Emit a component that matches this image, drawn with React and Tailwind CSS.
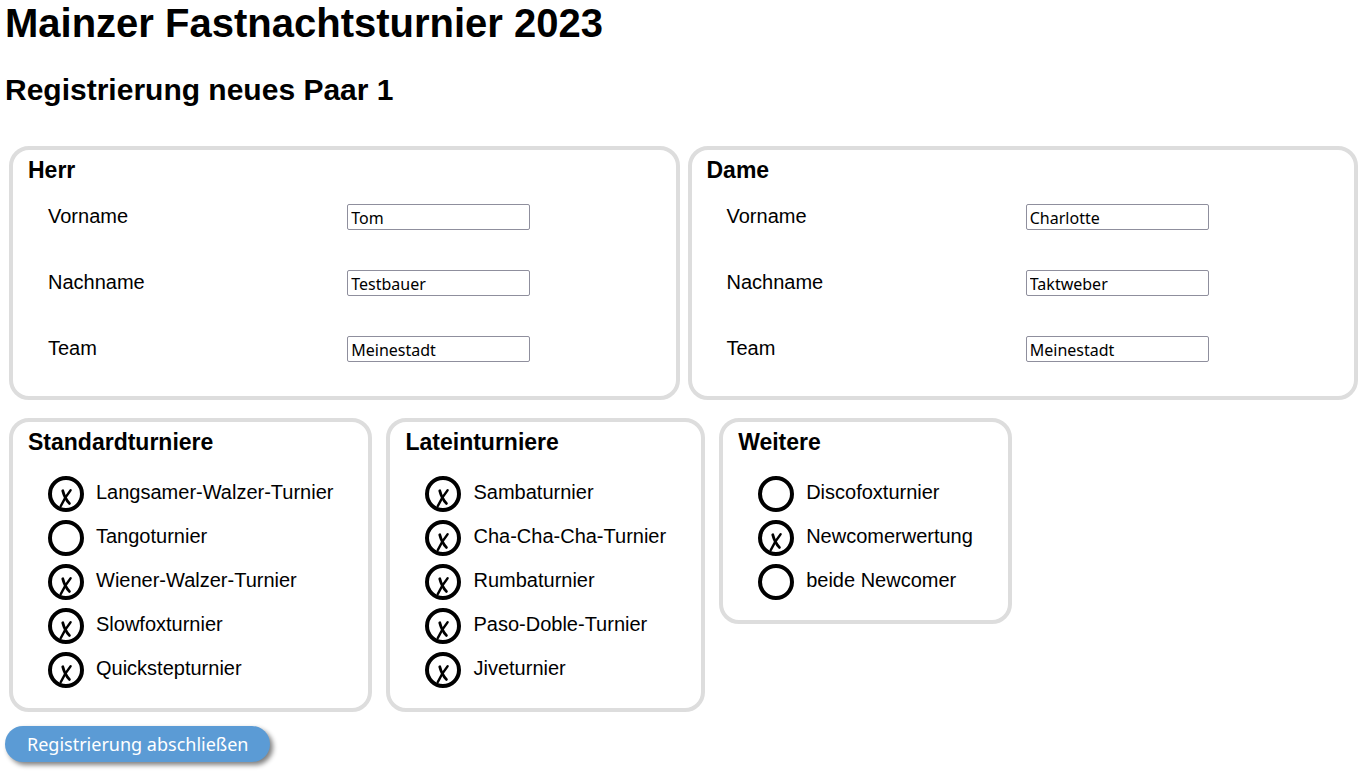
const people = [
  { id: "herr", title: "Herr", vorname: "Tom", nachname: "Testbauer", team: "Meinestadt" },
  { id: "dame", title: "Dame", vorname: "Charlotte", nachname: "Taktweber", team: "Meinestadt" },
];

const fields = [
  { key: "vorname", label: "Vorname" },
  { key: "nachname", label: "Nachname" },
  { key: "team", label: "Team" },
];

const groups = [
  {
    title: "Standardturniere",
    items: [
      ["Langsamer-Walzer-Turnier", true],
      ["Tangoturnier", false],
      ["Wiener-Walzer-Turnier", true],
      ["Slowfoxturnier", true],
      ["Quickstepturnier", true],
    ],
  },
  {
    title: "Lateinturniere",
    items: [
      ["Sambaturnier", true],
      ["Cha-Cha-Cha-Turnier", true],
      ["Rumbaturnier", true],
      ["Paso-Doble-Turnier", true],
      ["Jiveturnier", true],
    ],
  },
  {
    title: "Weitere",
    items: [
      ["Discofoxturnier", false],
      ["Newcomerwertung", true],
      ["beide Newcomer", false],
    ],
  },
];

function Card({ title, className, children }) {
  return (
    <section className={`rounded-[20px] border-4 border-[#dddddd] px-[15px] pt-[6px] ${className}`}>
      <h3 className="text-[23px] leading-7 font-bold">{title}</h3>
      <div className="mt-5 px-5">{children}</div>
    </section>
  );
}

function Person({ person }) {
  return (
    <Card title={person.title} className="pb-[34px]">
      <div className="flex flex-col gap-10">
        {fields.map(({ key, label }) => (
          <div key={key} className="grid grid-cols-2 items-start">
            <label htmlFor={`${person.id}-${key}`} className="leading-6">
              {label}
            </label>
            <input
              id={`${person.id}-${key}`}
              type="text"
              defaultValue={person[key]}
              className="ml-[3px] h-[26px] w-[183px] rounded-[2px] border border-[#8f8f9d] bg-white px-[3px] pt-[2px] font-['Noto_Sans',sans-serif] text-base leading-none"
            />
          </div>
        ))}
      </div>
    </Card>
  );
}

function Choice({ label, checked }) {
  return (
    <label className="flex items-start gap-3">
      <span className="grid size-9 shrink-0">
        <input
          type="checkbox"
          defaultChecked={checked}
          className="peer col-start-1 row-start-1 size-9 appearance-none rounded-full border-4 border-black bg-white"
        />
        <svg
          viewBox="0 0 36 36"
          aria-hidden="true"
          className="pointer-events-none invisible col-start-1 row-start-1 size-9 peer-checked:visible"
          fill="none"
          stroke="black"
          strokeLinecap="round"
        >
          <path d="M22.6 14.2 C19.5 18 15.5 24 12.8 30" strokeWidth="2.4" />
          <path d="M14.8 14.8 C16 19.5 18.3 24 21.4 27.4" strokeWidth="2.8" />
        </svg>
      </span>
      <span className="leading-8">{label}</span>
    </label>
  );
}

export default function App() {
  return (
    <main className="bg-white px-[5px] pb-4 font-['Liberation_Sans',Arial,sans-serif] text-xl text-black">
      <h1 className="text-[40px] leading-[46px] font-bold">Mainzer Fastnachtsturnier 2023</h1>
      <h2 className="mt-[26px] text-[30px] leading-9 font-bold">Registrierung neues Paar 1</h2>
      <form onSubmit={(event) => event.preventDefault()}>
        <div className="mt-[38px] mr-[-1px] ml-1 grid grid-cols-2 gap-2">
          {people.map((person) => (
            <Person key={person.id} person={person} />
          ))}
        </div>
        <div className="mt-[18px] ml-1 flex flex-wrap items-start gap-[14px]">
          {groups.map((group) => (
            <Card key={group.title} title={group.title} className="pb-5">
              <div className="flex flex-col gap-2">
                {group.items.map(([label, checked]) => (
                  <Choice key={label} label={label} checked={checked} />
                ))}
              </div>
            </Card>
          ))}
        </div>
        <button
          type="submit"
          className="mt-[14px] h-9 rounded-full bg-[#5b9bd5] px-[22px] font-['Noto_Sans',sans-serif] text-lg leading-9 text-white shadow-[3px_3px_5px_#808080]"
        >
          Registrierung abschließen
        </button>
      </form>
    </main>
  );
}
